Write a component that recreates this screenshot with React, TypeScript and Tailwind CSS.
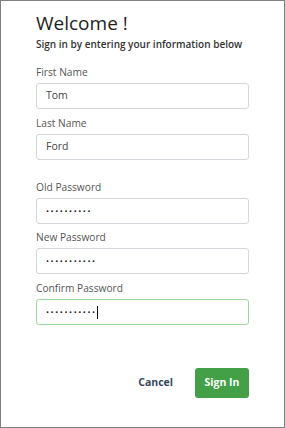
import React from "react";

const font = { fontFamily: '"Open Sans", "Noto Sans", sans-serif' };

const Field = ({
  label,
  value,
  dots,
  focused,
  className = "",
}: {
  label: string;
  value?: string;
  dots?: number;
  focused?: boolean;
  className?: string;
}) => (
  <div className={className}>
    <label className="mb-[4px] block text-[10.2px] leading-[14px] text-[#555]">
      {label}
    </label>
    <div
      className={
        "flex h-[26px] w-[213px] items-center rounded-[3px] border bg-white px-[9px] text-[10.5px] text-[#444] " +
        (focused ? "border-[#9fd69f]" : "border-[#d4d7db]")
      }
    >
      {dots ? (
        <span className="text-[8px] leading-none tracking-[1.6px] text-[#222]">
          {"•".repeat(dots)}
        </span>
      ) : (
        <span>{value}</span>
      )}
      {focused && <span className="h-[13px] w-px bg-black" />}
    </div>
  </div>
);

const App = () => {
  return (
    <div
      style={font}
      className="h-[428px] w-[285px] border border-[#808080] bg-white pl-[35px] pt-[10px]"
    >
      <h1 className="text-[19px] font-medium leading-[24px] text-[#1e1e1e]">
        Welcome !
      </h1>
      <p className="mt-[2px] text-[10px] font-semibold leading-[14px] text-[#333]">
        Sign in by entering your information below
      </p>

      <form className="mt-[14px]">
        <Field label="First Name" value="Tom" />
        <Field label="Last Name" value="Ford" className="mt-[7px]" />
        <Field label="Old Password" dots={10} className="mt-[20px]" />
        <Field label="New Password" dots={11} className="mt-[6px]" />
        <Field
          label="Confirm Password"
          dots={11}
          focused
          className="mt-[7px]"
        />

        <div className="mt-[43px] flex w-[213px] items-center justify-end gap-[22px]">
          <button
            type="button"
            className="text-[10.5px] font-bold text-[#34495e]"
          >
            Cancel
          </button>
          <button
            type="button"
            className="h-[30px] w-[54px] rounded-[3px] bg-[#43a047] text-[10.5px] font-bold text-white"
          >
            Sign In
          </button>
        </div>
      </form>
    </div>
  );
};

export default App;
